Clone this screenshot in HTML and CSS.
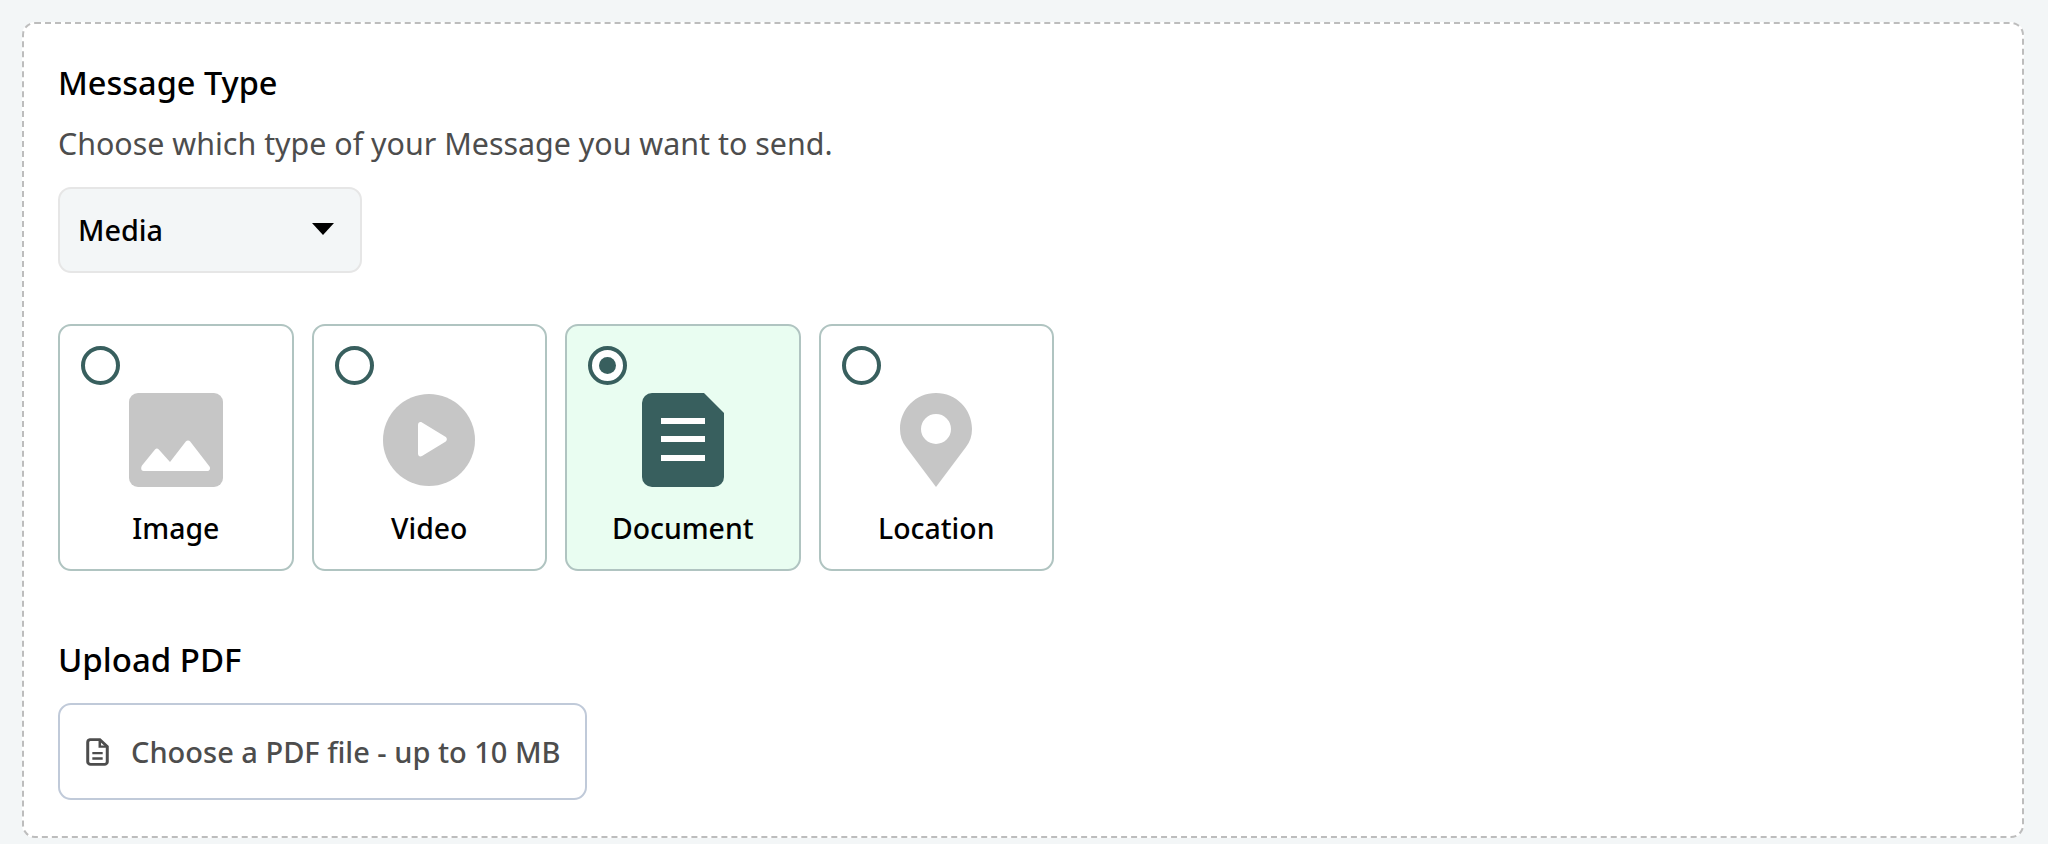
FILE: index.html
```html
<!DOCTYPE html>
<html lang="en">
<head>
<meta charset="utf-8">
<title>Message Type</title>
<link rel="stylesheet" href="styles.css">
</head>
<body>
<main class="panel">
  <h2 class="heading">Message Type</h2>
  <p class="hint">Choose which type of your Message you want to send.</p>
  <div class="select"><span>Media</span><i class="caret"></i></div>
  <div class="options">
    <label class="option">
      <span class="radio"></span>
      <span class="icon">
        <svg width="94" height="94" viewBox="0 0 94 94"><rect width="94" height="94" rx="9" fill="#c6c6c6"/><path d="M13 72.500 26 56.500a2.500 2.500 0 0 1 3.800 0L41 69 56.800 48.500a2.800 2.800 0 0 1 4.400 0L80.500 73.500c1.200 2 .3 4.500-2 4.500H14.500c-2.300 0-3-3-1.500-5.500Z" fill="#fff"/></svg>
      </span>
      <span class="label">Image</span>
    </label>
    <label class="option">
      <span class="radio"></span>
      <span class="icon">
        <svg width="92" height="92" viewBox="0 0 92 92"><circle cx="46" cy="46" r="46" fill="#c6c6c6"/><path d="M35 31c0-2.500 2-3.500 4-2.500l23 14c2.500 1.500 2.500 4 0 5.500L39 62c-2 1-4 0-4-2.500Z" fill="#fff"/></svg>
      </span>
      <span class="label">Video</span>
    </label>
    <label class="option selected">
      <span class="radio"><span class="dot"></span></span>
      <span class="icon">
        <svg width="82" height="94" viewBox="0 0 82 94"><path d="M10 0H62L82 20V84A10 10 0 0 1 72 94H10A10 10 0 0 1 0 84V10A10 10 0 0 1 10 0Z" fill="#385f5e"/><path d="M19 25h44v6H19zM19 43h44v6H19zM19 62h44v6H19z" fill="#fff"/></svg>
      </span>
      <span class="label">Document</span>
    </label>
    <label class="option">
      <span class="radio"></span>
      <span class="icon">
        <svg width="72" height="94" viewBox="0 0 72 94"><path fill-rule="evenodd" d="M36 0C16 0 0 16 0 36c0 7 2 13 6 18l30 40 30-40c4-5 6-11 6-18C72 16 56 0 36 0Zm0 21a15 15 0 1 1 0 30 15 15 0 0 1 0-30Z" fill="#c6c6c6"/></svg>
      </span>
      <span class="label">Location</span>
    </label>
  </div>
  <h2 class="heading upload-heading">Upload PDF</h2>
  <div class="upload">
    <svg class="file-icon" width="23" height="28" viewBox="0 0 20 26" preserveAspectRatio="none" fill="none" stroke="#4d4d4d" stroke-width="2.600"><path d="M3.500 1.500H12L18.500 8V22a2.500 2.500 0 0 1-2.500 2.500H4A2.500 2.500 0 0 1 1.500 22V4A2.500 2.500 0 0 1 3.500 1.500Z"/><path d="M12 1.500V8h6.500M5.500 14h9M5.500 19h9" stroke-width="2.200"/></svg>
    <span>Choose a PDF file - up to 10 MB</span>
  </div>
</main>
</body>
</html>
```
FILE: styles.css
```css
* { box-sizing: border-box; }
html, body { margin: 0; height: 100%; }
body {
  background: #f3f6f7;
  padding: 22px 24px 0 22px;
  font-family: "Noto Sans", "Open Sans", sans-serif;
  color: #000;
  overflow: hidden;
}
.panel {
  height: 816px;
  background: #fff;
  border: 2px dashed #bdbdbd;
  border-radius: 13px;
  padding: 39px 34px 0;
}
.heading {
  margin: 0;
  font-size: 32.500px;
  line-height: 40px;
  font-weight: 500;
}
.upload-heading { font-size: 33px; }
.hint {
  margin: 21px 0 0;
  font-size: 30.400px;
  line-height: 40px;
  color: #4d4d4d;
}
.select {
  margin-top: 23px;
  width: 304px;
  height: 86px;
  padding: 0 26px 2px 18px;
  display: flex;
  align-items: center;
  justify-content: space-between;
  background: #f3f6f7;
  border: 2px solid #e6e6e6;
  border-radius: 13px;
  font-size: 28.800px;
  font-weight: 500;
}
.caret {
  width: 0;
  height: 0;
  border-left: 11px solid transparent;
  border-right: 11px solid transparent;
  border-top: 12px solid #000;
}
.options { margin-top: 51px; display: flex; gap: 18px; }
.option {
  position: relative;
  width: 235.500px;
  height: 247px;
  display: flex;
  flex-direction: column;
  align-items: center;
  padding-top: 67px;
  background: #fff;
  border: 2px solid #b0c4c1;
  border-radius: 13px;
}
.option.selected { background: #e9fdf1; }
.radio {
  position: absolute;
  left: 21px;
  top: 20px;
  width: 39px;
  height: 39px;
  display: flex;
  align-items: center;
  justify-content: center;
  background: #fff;
  border: 4px solid #385f5e;
  border-radius: 50%;
}
.dot { width: 17px; height: 17px; background: #385f5e; border-radius: 50%; }
.icon { height: 94px; display: flex; align-items: center; justify-content: center; }
.label { margin-top: 22px; font-size: 28.400px; line-height: 38px; font-weight: 500; }
.upload-heading { margin-top: 69px; }
.upload {
  margin-top: 23px;
  width: 529px;
  height: 97px;
  padding: 0 20px 0 26px;
  display: flex;
  align-items: center;
  gap: 22px;
  background: #fff;
  border: 2px solid #c0cad9;
  border-radius: 13px;
  font-size: 29px;
  font-weight: 500;
  color: #4d4d4d;
  white-space: nowrap;
}
.file-icon { flex: none; }
```
